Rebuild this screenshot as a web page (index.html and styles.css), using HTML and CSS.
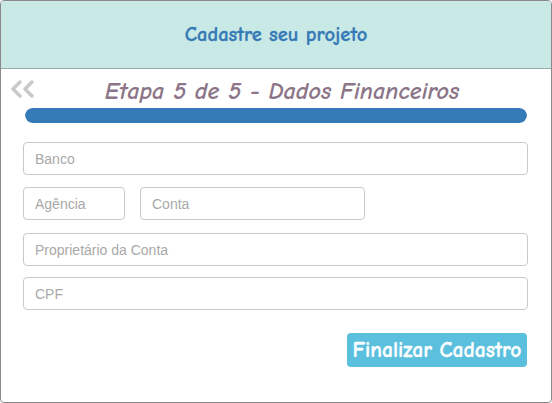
FILE: index.html
```html
<!DOCTYPE html>
<html lang="pt-BR">
<head>
<meta charset="utf-8">
<title>Cadastre seu projeto</title>
<link rel="stylesheet" href="styles.css">
</head>
<body>
<div class="frame">
  <header class="header">
    <h1 class="header-title">Cadastre seu projeto</h1>
  </header>
  <main class="content">
    <div class="step-row">
      <span class="back" aria-label="Voltar">
        <svg width="25" height="18" viewBox="0 0 25 18"><polyline points="10,2 3,9 10,16" fill="none" stroke="#c9c9c9" stroke-width="3.4" stroke-linecap="round" stroke-linejoin="round"/><polyline points="22,2 15,9 22,16" fill="none" stroke="#c9c9c9" stroke-width="3.4" stroke-linecap="round" stroke-linejoin="round"/></svg>
      </span>
      <h2 class="step-title">Etapa 5 de 5 - Dados Financeiros</h2>
    </div>
    <div class="progress"><div class="progress-bar" style="width:100%"></div></div>
    <form class="form">
      <input class="field" type="text" placeholder="Banco">
      <div class="row">
        <input class="field field-agencia" type="text" placeholder="Agência">
        <input class="field field-conta" type="text" placeholder="Conta">
      </div>
      <input class="field field-owner" type="text" placeholder="Proprietário da Conta">
      <input class="field field-cpf" type="text" placeholder="CPF">
      <div class="actions">
        <button class="btn" type="button">Finalizar Cadastro</button>
      </div>
    </form>
  </main>
</div>
</body>
</html>
```
FILE: styles.css
```css
* { box-sizing: border-box; }
html, body { margin: 0; padding: 0; background: #fff; }
.frame {
  width: 552px;
  height: 403px;
  border: 1px solid #8a8a8a;
  border-radius: 4px;
  overflow: hidden;
  display: flex;
  flex-direction: column;
}
.header {
  height: 68px;
  flex: 0 0 68px;
  background: #c8e9e6;
  border-bottom: 1px solid #9aa;
  display: flex;
  align-items: center;
  justify-content: center;
}
.header-title {
  margin: 0;
  font-family: "Comic Sans MS", "Comic Neue", "DejaVu Sans", sans-serif;
  font-size: 20.5px;
  font-weight: 700;
  color: #3579b5;
  -webkit-text-stroke: 0.3px #3579b5;
}
.content {
  padding: 0 23px 0 22px;
}
.step-row {
  position: relative;
  height: 39px;
  display: flex;
  align-items: center;
  justify-content: center;
  padding-top: 5px;
}
.back {
  position: absolute;
  left: -13px;
  top: 11px;
  display: block;
  line-height: 0;
}
.step-title {
  margin: 0 0 0 13px;
  font-family: "Comic Sans MS", "Comic Neue", "DejaVu Sans", sans-serif;
  font-style: italic;
  font-weight: 700;
  font-size: 24.2px;
  line-height: 28px;
  color: #8c7588;
}
.progress {
  margin: 0 1px 0 2px;
  height: 15px;
  border-radius: 8px;
  background: #eee;
  overflow: hidden;
}
.progress-bar {
  height: 100%;
  background: #337ab7;
  border-radius: 8px;
}
.form {
  margin-top: 19px;
  display: flex;
  flex-direction: column;
  gap: 12px;
}
.field {
  display: block;
  width: 100%;
  height: 33px;
  padding: 0 11px;
  border: 1px solid #c9c9c9;
  border-radius: 4px;
  font-family: "Liberation Sans", Arial, sans-serif;
  font-size: 14px;
  color: #555;
  background: #fff;
  outline: none;
}
.field::placeholder { color: #a9a9a9; }
.field-owner { margin-top: 1px; }
.field-cpf { margin-top: -1px; }
.row {
  display: flex;
  gap: 15px;
}
.field-agencia { width: 102px; }
.field-conta { width: 225px; }
.actions {
  display: flex;
  justify-content: flex-end;
  margin-top: 11px;
  padding-right: 1px;
}
.btn {
  width: 180px;
  height: 34px;
  border: none;
  border-radius: 4px;
  background: #5bc0de;
  color: #fff;
  font-family: "Comic Sans MS", "Comic Neue", "DejaVu Sans", sans-serif;
  font-weight: 700;
  font-size: 21.6px;
  -webkit-text-stroke: 0.3px #fff;
  padding: 0;
}
```
